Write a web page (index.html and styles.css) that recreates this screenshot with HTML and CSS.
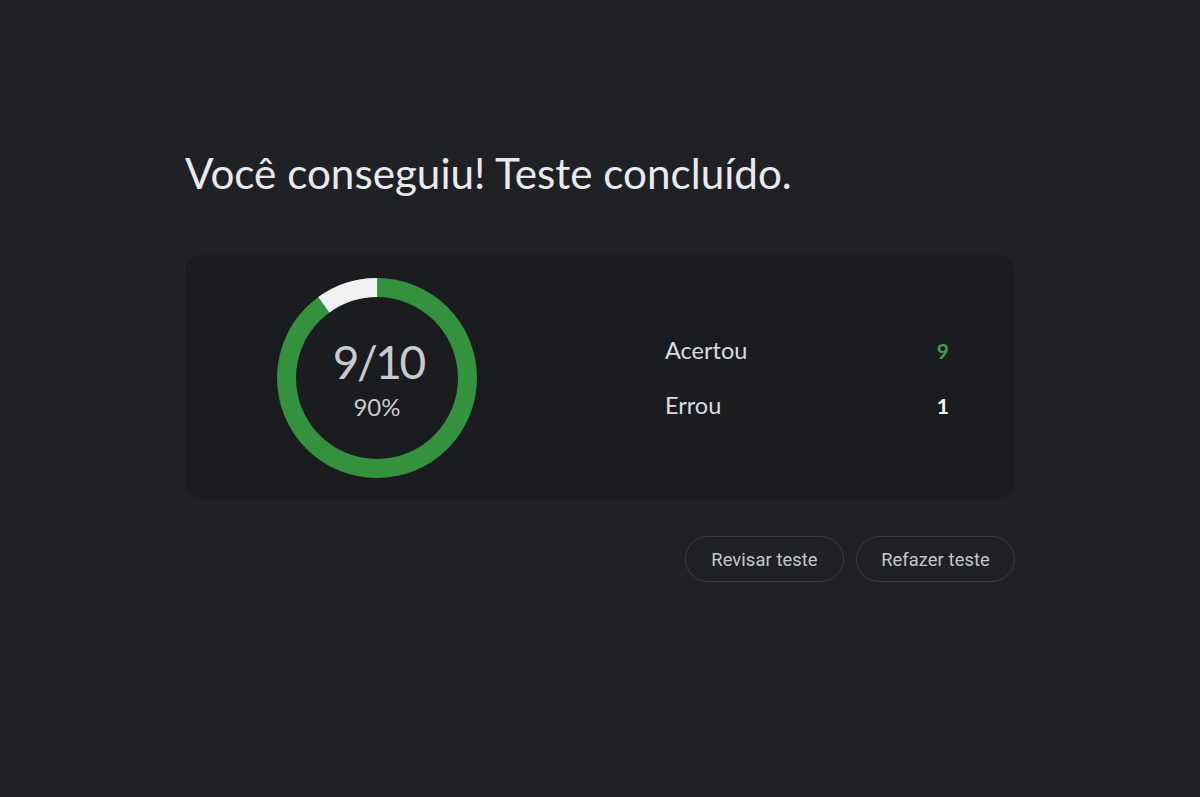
FILE: index.html
```html
<!DOCTYPE html>
<html lang="pt">
<head>
<meta charset="utf-8">
<link rel="stylesheet" href="styles.css">
</head>
<body>
<main class="page">
  <h1 class="title">Você conseguiu! Teste concluído.</h1>
  <section class="card">
    <div class="ring">
      <svg width="200" height="200" viewBox="0 0 200 200">
        <circle cx="100" cy="100" r="90.5" fill="none" stroke="#34923f" stroke-width="19"/>
        <circle cx="100" cy="100" r="90.5" fill="none" stroke="#f1f1f1" stroke-width="19"
          stroke-dasharray="56.86 1000" transform="rotate(-126 100 100)"/>
      </svg>
      <div class="ring-text">
        <div class="score">9/10</div>
        <div class="pct">90%</div>
      </div>
    </div>
    <div class="stats">
      <div class="row"><span class="label">Acertou</span><span class="val good">9</span></div>
      <div class="row"><span class="label">Errou</span><span class="val">1</span></div>
    </div>
  </section>
  <div class="actions">
    <button class="btn">Revisar teste</button>
    <button class="btn">Refazer teste</button>
  </div>
</main>
</body>
</html>
```
FILE: styles.css
```css
html, body { margin: 0; padding: 0; }
body {
  background: #202124;
  width: 1200px;
  height: 797px;
  overflow: hidden;
  font-family: "Lato", "Inter", sans-serif;
}
.page {
  width: 830px;
  margin: 0 0 0 185px;
  padding-top: 145px;
}
.title {
  margin: 0;
  font-weight: 400;
  font-size: 42.2px;
  line-height: 56px;
  color: #e8eaed;
  letter-spacing: 0;
}
.card {
  margin-top: 54px;
  background: #1b1c1f;
  border-radius: 16px;
  height: 245px;
  box-sizing: border-box;
  padding: 23px 0 0 92px;
  display: flex;
  align-items: flex-start;
}
.ring {
  position: relative;
  width: 200px;
  height: 200px;
  flex: none;
}
.ring svg { display: block; }
.ring-text {
  position: absolute;
  inset: 0;
  display: flex;
  flex-direction: column;
  align-items: center;
  justify-content: center;
  color: #c9cacc;
  padding-top: 2px;
  box-sizing: border-box;
}
.score { font-size: 46px; line-height: 52px; letter-spacing: -2.5px; margin-right: -2.5px; }
.pct { font-size: 24px; line-height: 30px; margin-top: 4px; }
.stats {
  margin-left: 188px;
  width: 284px;
  padding-top: 57px;
  display: flex;
  flex-direction: column;
  gap: 25px;
}
.row {
  display: flex;
  justify-content: space-between;
  align-items: center;
  height: 30px;
  color: #dadce0;
  font-size: 23.5px;
}
.val { font-weight: 700; color: #ffffff; font-size: 21px; }
.val.good { color: #3fa04a; }
.actions {
  margin-top: 36px;
  display: flex;
  justify-content: flex-end;
  gap: 12px;
}
.btn {
  height: 46px;
  border-radius: 23px;
  border: 1px solid #3c3e42;
  background: transparent;
  color: #c4c7cb;
  font-family: "Roboto", "Inter", sans-serif;
  font-size: 18.3px;
  padding: 0 24px;
  width: 159px;
  letter-spacing: 0.1px;
}
```
